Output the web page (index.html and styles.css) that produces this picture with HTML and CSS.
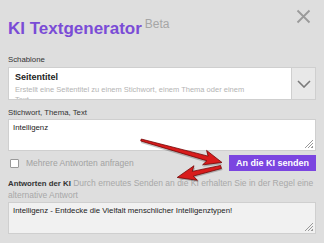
FILE: index.html
```html
<!DOCTYPE html>
<html lang="de">

<head>
  <meta charset="UTF-8">
  <meta name="viewport" content="width=device-width, initial-scale=1.0">
  <title>KI Textgenerator</title>
  <link rel="stylesheet" href="styles.css">
</head>

<body>
  <div class="dialog">
    <div class="head">
      <h1 class="title">KI Textgenerator<span class="beta">Beta</span></h1>
      <button class="close" aria-label="Schließen">
        <svg width="15" height="15" viewBox="0 0 15 15">
          <path d="M1.5 1.5 L13.5 13.5 M13.5 1.5 L1.5 13.5" stroke="#9a9a9a" stroke-width="1.8" fill="none" />
        </svg>
      </button>
    </div>

    <div class="label">Schablone</div>
    <div class="select">
      <div class="select-text">
        <div class="select-title">Seitentitel</div>
        <div class="select-desc">Erstellt eine Seitentitel zu einem Stichwort, einem Thema oder einem<br>Text</div>
      </div>
      <div class="select-btn">
        <svg width="14" height="8" viewBox="0 0 14 8">
          <path d="M1 1 L7 7 L13 1" stroke="#7a7a7a" stroke-width="1.6" fill="none" />
        </svg>
      </div>
    </div>

    <div class="label label-2">Stichwort, Thema, Text</div>
    <div class="area">Intelligenz<span class="grip"></span></div>

    <div class="row">
      <label class="check"><span class="check-box"></span>Mehrere Antworten anfragen</label>
      <button class="send">An die KI senden</button>
    </div>

    <p class="answer-label"><b>Antworten der KI</b> Durch erneutes Senden an die KI erhalten Sie in der Regel eine alternative Antwort</p>
    <div class="area area-out">Intelligenz - Entdecke die Vielfalt menschlicher Intelligenztypen!<span class="grip"></span></div>

    <!-- markierungen -->
    <svg class="arrows" width="324" height="243" viewBox="0 0 324 243">
      <g transform="translate(141,140) rotate(15.5)">
        <polygon points="0,-1 69,-2.4 66,-7.5 84,0 66,7.5 69,2.4 0,1" fill="rgba(0,0,0,0.22)" transform="translate(0.8,1.8)" />
        <polygon points="0,-1 69,-2.4 66,-7.5 84,0 66,7.5 69,2.4 0,1" fill="#d81c1c" stroke="#6e0000" stroke-width="0.7" />
      </g>
      <g transform="translate(221,167) rotate(166.6)">
        <polygon points="0,-1.6 29,-2.4 26,-7.5 45,0 26,7.5 29,2.4 0,1.6" fill="rgba(0,0,0,0.22)" transform="translate(-0.8,-1.8)" />
        <polygon points="0,-1.6 29,-2.4 26,-7.5 45,0 26,7.5 29,2.4 0,1.6" fill="#d81c1c" stroke="#6e0000" stroke-width="0.7" />
      </g>
    </svg>
  </div>
</body>

</html>
```

FILE: styles.css
```css
* {
  box-sizing: border-box;
}

body {
  margin: 0;
  background-color: #dedede;
  font-family: "Liberation Sans", Arial, sans-serif;
  color: #333;
}

.dialog {
  position: relative;
  width: 324px;
  height: 243px;
  padding: 0 8px;
  overflow: hidden;
}

.head {
  display: flex;
  justify-content: space-between;
  align-items: flex-start;
  height: 55px;
}

.title {
  margin: 0;
  padding-top: 14px;
  font-size: 17px;
  line-height: 20px;
  font-weight: bold;
  color: #7a4cd6;
}

.beta {
  margin-left: 3px;
  font-size: 12px;
  font-weight: normal;
  color: #a6a6a6;
  vertical-align: 6px;
}

.close {
  margin: 9px 5px 0 0;
  padding: 0;
  border: none;
  background: none;
  width: 15px;
  height: 15px;
}

.close svg {
  display: block;
}

.label {
  font-size: 7.8px;
  line-height: 10px;
  color: #333;
}

.select {
  display: flex;
  height: 33px;
  margin-top: 2px;
  border: 1px solid #cfcfcf;
  background: #fff;
  overflow: hidden;
}

.select-text {
  flex: 1;
  padding: 3px 6px 0;
}

.select-title {
  font-size: 9px;
  line-height: 12px;
  font-weight: bold;
  color: #222;
}

.select-desc {
  margin-top: 2px;
  font-size: 7.5px;
  line-height: 10px;
  color: #b4b4b4;
}

.select-btn {
  width: 24px;
  display: flex;
  align-items: center;
  justify-content: center;
  background: #e8e8e8;
  border-left: 1px solid #cfcfcf;
}

.label-2 {
  margin-top: 8px;
}

.area {
  position: relative;
  height: 32px;
  margin-top: 1px;
  padding: 3px 4px;
  border: 1px solid #cfcfcf;
  background: #fff;
  font-size: 7.8px;
  line-height: 10px;
  color: #222;
}

.grip {
  position: absolute;
  right: 2px;
  bottom: 2px;
  width: 8px;
  height: 8px;
  background: linear-gradient(135deg, transparent 45%, #999 45%, #999 52%, transparent 52%, transparent 65%, #999 65%, #999 72%, transparent 72%, transparent 85%, #999 85%);
}

.row {
  display: flex;
  justify-content: space-between;
  align-items: center;
  margin-top: 3px;
  height: 18px;
}

.check {
  display: flex;
  align-items: center;
  gap: 7px;
  padding-left: 2px;
  font-size: 8.5px;
  color: #a2a2a2;
}

.check-box {
  width: 9px;
  height: 9px;
  border: 1px solid #999;
  border-radius: 1px;
  background: #fff;
}

.send {
  height: 16px;
  padding: 0 7px;
  border: none;
  background: #7b45e0;
  color: #fff;
  font-family: "Liberation Sans", Arial, sans-serif;
  font-size: 9px;
  font-weight: bold;
}

.answer-label {
  margin: 6px 0 0;
  font-size: 8.5px;
  line-height: 10.5px;
  color: #a8a8a8;
}

.answer-label b {
  font-size: 7.8px;
  color: #333;
}

.area-out {
  margin-top: 2px;
  background: #f1f1f1;
}

.arrows {
  position: absolute;
  left: 0;
  top: 0;
  pointer-events: none;
}
```
